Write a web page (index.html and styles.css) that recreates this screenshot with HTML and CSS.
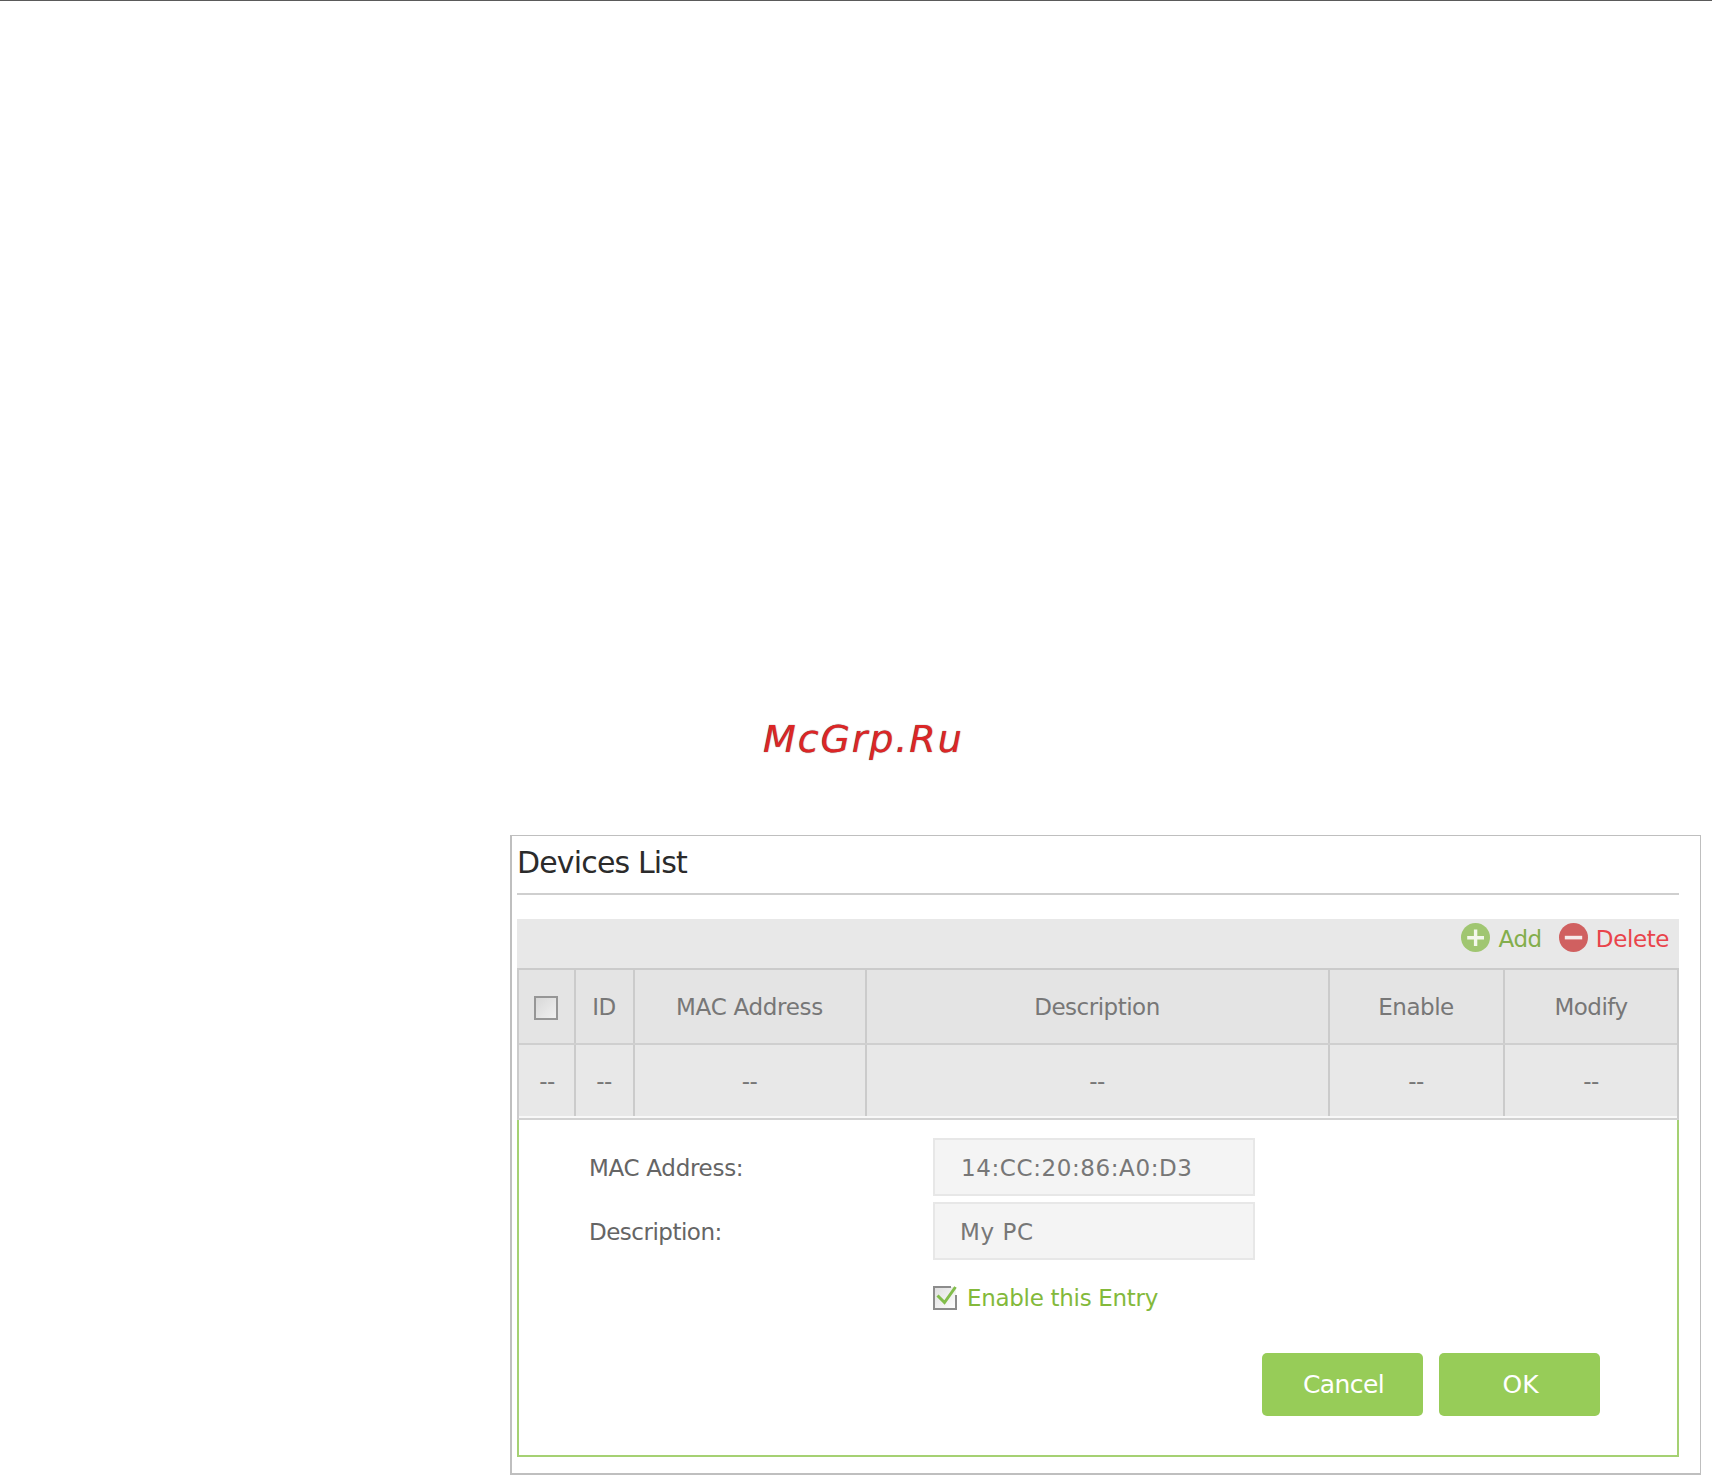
FILE: index.html
```html
<!DOCTYPE html>
<html lang="en">
<head>
<meta charset="utf-8">
<title>Devices List</title>
<link rel="stylesheet" href="styles.css">
</head>
<body>
<main class="page">
  <div class="brand">McGrp.Ru</div>
  <section class="panel">
    <h1 class="title">Devices List</h1>
    <div class="toolbar">
      <svg class="tool-icon" viewBox="0 0 29 29"><circle cx="14.5" cy="14.5" r="14.5" fill="#a0c671"/><path d="M6.2 14.8H23M14.6 6.5V23" stroke="#f3f7ec" stroke-width="3.4"/></svg>
      <span class="add">Add</span>
      <svg class="tool-icon" viewBox="0 0 29 29"><circle cx="14.5" cy="14.5" r="14.5" fill="#d06060"/><path d="M5.8 14.6H23.2" stroke="#f6eaea" stroke-width="3.6"/></svg>
      <span class="delete">Delete</span>
    </div>
    <div class="grid">
      <div class="row head">
        <div class="cell"><span class="box"></span></div>
        <div class="cell">ID</div>
        <div class="cell wide">MAC Address</div>
        <div class="cell">Description</div>
        <div class="cell">Enable</div>
        <div class="cell">Modify</div>
      </div>
      <div class="row">
        <div class="cell">--</div>
        <div class="cell">--</div>
        <div class="cell">--</div>
        <div class="cell">--</div>
        <div class="cell">--</div>
        <div class="cell">--</div>
      </div>
    </div>
    <form class="form">
      <div class="field"><span class="label wide">MAC Address:</span><div class="input mac">14:CC:20:86:A0:D3</div></div>
      <div class="field"><span class="label">Description:</span><div class="input">My PC</div></div>
      <div class="enable">
        <svg class="check" viewBox="0 0 24 24"><defs><linearGradient id="g" x2="1" y2="1"><stop stop-color="#dedede"/><stop offset="1" stop-color="#fff"/></linearGradient></defs><rect x="1" y="1" width="22" height="22" fill="url(#g)"/><path d="M18 1H1V23H23V9" fill="none" stroke="#8c8c8c" stroke-width="2"/><path d="M4.5 9.5L11.5 16.5L22.5 1" fill="none" stroke="#82bd4b" stroke-width="3"/></svg>
        <span>Enable this Entry</span>
      </div>
      <div class="actions"><div class="button">Cancel</div><div class="button ok">OK</div></div>
    </form>
  </section>
</main>
</body>
</html>
```
FILE: styles.css
```css
* { box-sizing: border-box; }
body { margin: 0; background: #fff; font-family: "DejaVu Sans", sans-serif; font-size: 23px; letter-spacing: -0.5px; color: #777; }
.page { height: 1475px; border-top: 1px solid #5a5a5a; overflow: hidden; display: flex; flex-direction: column; }
.brand { margin: 713px 0 0 763px; height: 50px; line-height: 50px; font-size: 38px; font-style: oblique; letter-spacing: 1.9px; color: #dc2626; text-shadow: 0 0 1px #555; white-space: nowrap; }
.panel { margin: 71px 0 0 510px; width: 1191px; height: 640px; border: solid #bfbfbf; border-width: 1px 1px 2px 2px; padding: 0 21px 0 5px; }
.title { margin: 0; height: 59px; padding-top: 7px; line-height: 40px; border-bottom: 2px solid #cfcfcf; font-size: 30px; font-weight: 400; letter-spacing: -0.85px; color: #2b2b2b; }
.toolbar { margin-top: 24px; height: 49px; background: #e8e8e8; display: flex; justify-content: flex-end; align-items: flex-start; padding: 4px 10px 0 0; line-height: 32px; letter-spacing: -0.4px; }
.tool-icon { width: 29px; height: 29px; flex: none; }
.add { color: #83ae4c; margin: 0 17px 0 8px; }
.delete { color: #e9444b; margin-left: 8px; }
.grid { border: 2px solid #cbcbcb; border-bottom-color: #d2d2d2; }
.row { display: grid; grid-template-columns: 57px 59px 232px 463px 175px 172px; height: 73px; background: #e8e8e8; }
.head { height: 75px; background: #e4e4e4; border-bottom: 2px solid #cfcfcf; }
.row:last-child { border-bottom: 2px solid #f8f8f8; }
.cell { display: flex; align-items: center; justify-content: center; border-right: 2px solid #cbcbcb; padding-right: 1px; }
.cell:first-child { padding: 0 0 0 1px; }
.cell:last-child { border-right: 0; padding-right: 0; }
.wide { letter-spacing: -0.3px; }
.box { width: 24px; height: 24px; border: 2px solid #969696; background: linear-gradient(135deg, #d8d8d8, #f0f0f0); margin: 3px 2px 0 0; }
.form { height: 337px; border: solid #a5d173; border-width: 0 2px 2px; padding: 18px 77px 0 70px; }
.field { display: flex; align-items: center; height: 57px; margin-bottom: 7px; }
.label { width: 344px; padding-top: 2px; color: #656565; }
.input { width: 322px; height: 58px; line-height: 56px; border: 2px solid #e7e7e7; background: #f4f4f4; padding-left: 25px; letter-spacing: 0.6px; }
.mac { padding-left: 26px; }
.enable { display: flex; align-items: center; height: 24px; margin: 27px 0 0 344px; gap: 10px; letter-spacing: -0.3px; color: #83b93b; }
.check { width: 24px; height: 24px; flex: none; }
.actions { margin-top: 43px; display: flex; justify-content: flex-end; gap: 16px; }
.button { width: 161px; height: 63px; line-height: 64px; padding-left: 2px; text-align: center; border-radius: 5px; background: #97cc58; color: #fff; font-size: 25px; letter-spacing: -0.6px; }
.ok { letter-spacing: 0; }
```
